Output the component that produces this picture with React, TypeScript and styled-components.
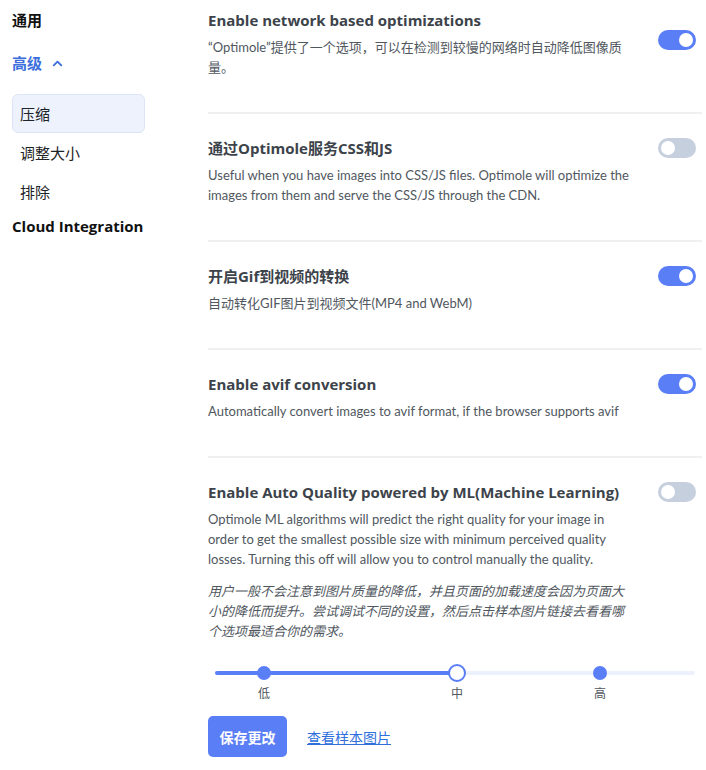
import React, { useState } from "react";
import styled, { createGlobalStyle } from "styled-components";
import { ChevronUp } from "lucide-react";

const GlobalStyle = createGlobalStyle`
  body {
    margin: 0;
    background: #fff;
    font-family: "Segoe UI", Lato, "Noto Sans CJK SC", sans-serif;
  }
`;

const boldFont = `"Open Sans", "Noto Sans CJK SC", sans-serif`;

const Page = styled.div`
  display: flex;
  padding-top: 10px;
  width: 706px;
  box-sizing: border-box;
`;

const Sidebar = styled.nav`
  width: 208px;
  padding-left: 12px;
  box-sizing: border-box;
  display: flex;
  flex-direction: column;
`;

const NavTitle = styled.div<{ active?: boolean }>`
  font-family: ${boldFont};
  font-size: 15px;
  line-height: 20px;
  font-weight: 700;
  color: ${({ active }) => (active ? "#3c6fdc" : "#111")};
  display: flex;
  align-items: center;
  gap: 8px;
`;

const NavGroup = styled.div`
  margin-top: 23px;
`;

const SubList = styled.div`
  margin-top: 21px;
  display: flex;
  flex-direction: column;
`;

const SubItem = styled.div<{ selected?: boolean }>`
  width: 133px;
  height: 39px;
  box-sizing: border-box;
  display: flex;
  align-items: center;
  padding-left: 7px;
  font-size: 15px;
  color: #1d2327;
  border-radius: 6px;
  border: 1px solid ${({ selected }) => (selected ? "#dce5f5" : "transparent")};
  background: ${({ selected }) => (selected ? "#edf2fd" : "transparent")};
`;

const CloudTitle = styled(NavTitle)`
  margin-top: 5px;
`;

const Main = styled.main`
  width: 494px;
  display: flex;
  flex-direction: column;
`;

const Section = styled.section<{ first?: boolean; last?: boolean }>`
  display: flex;
  justify-content: space-between;
  align-items: flex-start;
  padding: ${({ first }) => (first ? "0" : "24px")} 0 ${({ last }) => (last ? "0" : "35px")};
  border-bottom: ${({ last }) => (last ? "none" : "2px solid #f0f0f1")};
`;

const TextCol = styled.div`
  width: 425px;
`;

const Title = styled.h3`
  margin: 0 0 7px;
  font-family: ${boldFont};
  font-size: 15px;
  line-height: 20px;
  font-weight: 700;
  color: #3c434a;
`;

const Desc = styled.p<{ italic?: boolean }>`
  margin: ${({ italic }) => (italic ? "12px 0 0" : "0")};
  font-size: 13px;
  line-height: 20px;
  color: #50575e;
  font-style: ${({ italic }) => (italic ? "italic" : "normal")};
`;

const Toggle = styled.button<{ on: boolean; offset?: number }>`
  position: relative;
  flex: none;
  width: 38px;
  height: 20px;
  margin: ${({ offset }) => offset ?? 0}px 6px 0 0;
  padding: 0;
  border: none;
  border-radius: 10px;
  cursor: pointer;
  background: ${({ on }) => (on ? "#5a7ef6" : "#c5cfdd")};

  &::after {
    content: "";
    position: absolute;
    top: 3px;
    left: ${({ on }) => (on ? "21px" : "3px")};
    width: 14px;
    height: 14px;
    border-radius: 50%;
    background: #fff;
  }
`;

const SliderWrap = styled.div`
  position: relative;
  margin: 26px 7px 0;
  height: 34px;
`;

const Track = styled.div`
  position: absolute;
  left: 0;
  right: 0;
  top: 4px;
  height: 4px;
  border-radius: 2px;
  background: #edf1fd;
`;

const Fill = styled.div`
  height: 100%;
  border-radius: 2px;
  background: #5a7ef6;
`;

const Thumb = styled.span<{ current?: boolean }>`
  position: absolute;
  top: 6px;
  width: 14px;
  height: 14px;
  transform: translate(-50%, -50%);
  border-radius: 50%;
  box-sizing: content-box;
  cursor: pointer;
  background: ${({ current }) => (current ? "#fff" : "#5a7ef6")};
  border: ${({ current }) => (current ? "2px solid #5a7ef6" : "none")};
`;

const Mark = styled.span`
  position: absolute;
  top: 19px;
  transform: translateX(-50%);
  font-size: 12px;
  line-height: 16px;
  color: #50575e;
`;

const Actions = styled.div`
  display: flex;
  align-items: center;
  gap: 20px;
  margin-top: 15px;
`;

const SaveButton = styled.button`
  width: 79px;
  height: 41px;
  border: none;
  border-radius: 5px;
  background: #5a7ef6;
  color: #fff;
  font: 700 14px ${boldFont};
  cursor: pointer;
`;

const SampleLink = styled.a`
  font-size: 14px;
  color: #2f6fdc;
  text-decoration: underline;
  cursor: pointer;
`;

type Setting = {
  title: string;
  desc: string;
  on: boolean;
};

const settings: Setting[] = [
  {
    title: "Enable network based optimizations",
    desc: "“Optimole”提供了一个选项，可以在检测到较慢的网络时自动降低图像质量。",
    on: true,
  },
  {
    title: "通过Optimole服务CSS和JS",
    desc: "Useful when you have images into CSS/JS files. Optimole will optimize the images from them and serve the CSS/JS through the CDN.",
    on: false,
  },
  {
    title: "开启Gif到视频的转换",
    desc: "自动转化GIF图片到视频文件(MP4 and WebM)",
    on: true,
  },
  {
    title: "Enable avif conversion",
    desc: "Automatically convert images to avif format, if the browser supports avif",
    on: true,
  },
];

const levels = [
  { label: "低", pos: 10.2 },
  { label: "中", pos: 50.4 },
  { label: "高", pos: 80.2 },
];

export default function App() {
  const [toggles, setToggles] = useState(settings.map((s) => s.on));
  const [autoQuality, setAutoQuality] = useState(false);
  const [level, setLevel] = useState(1);

  const flip = (i: number) =>
    setToggles((t) => t.map((v, j) => (j === i ? !v : v)));

  return (
    <>
      <GlobalStyle />
      <Page>
        <Sidebar>
          <NavTitle>通用</NavTitle>
          <NavGroup>
            <NavTitle active>
              高级 <ChevronUp size={15} strokeWidth={3} />
            </NavTitle>
            <SubList>
              <SubItem selected>压缩</SubItem>
              <SubItem>调整大小</SubItem>
              <SubItem>排除</SubItem>
            </SubList>
          </NavGroup>
          <CloudTitle>Cloud Integration</CloudTitle>
        </Sidebar>

        <Main>
          {settings.map((s, i) => (
            <Section key={s.title} first={i === 0}>
              <TextCol>
                <Title>{s.title}</Title>
                <Desc>{s.desc}</Desc>
              </TextCol>
              <Toggle
                on={toggles[i]}
                offset={i === 0 ? 20 : 0}
                onClick={() => flip(i)}
              />
            </Section>
          ))}

          <Section last>
            <TextCol>
              <Title>Enable Auto Quality powered by ML(Machine Learning)</Title>
              <Desc>
                Optimole ML algorithms will predict the right quality for your
                image in order to get the smallest possible size with minimum
                perceived quality losses. Turning this off will allow you to
                control manually the quality.
              </Desc>
              <Desc italic>
                用户一般不会注意到图片质量的降低，并且页面的加载速度会因为页面大小的降低而提升。尝试调试不同的设置，然后点击样本图片链接去看看哪个选项最适合你的需求。
              </Desc>
            </TextCol>
            <Toggle on={autoQuality} onClick={() => setAutoQuality(!autoQuality)} />
          </Section>

          <SliderWrap>
            <Track>
              <Fill style={{ width: `${levels[level].pos}%` }} />
            </Track>
            {levels.map((l, i) => (
              <React.Fragment key={l.label}>
                <Thumb
                  current={i === level}
                  style={{ left: `${l.pos}%` }}
                  onClick={() => setLevel(i)}
                />
                <Mark style={{ left: `${l.pos}%` }}>{l.label}</Mark>
              </React.Fragment>
            ))}
          </SliderWrap>

          <Actions>
            <SaveButton>保存更改</SaveButton>
            <SampleLink>查看样本图片</SampleLink>
          </Actions>
        </Main>
      </Page>
    </>
  );
}
